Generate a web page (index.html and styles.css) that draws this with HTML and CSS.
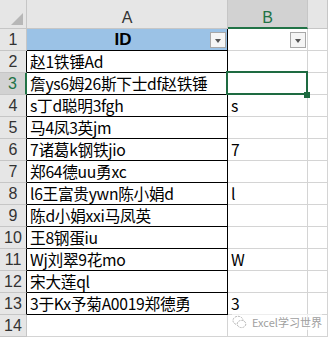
FILE: index.html
```html
<!DOCTYPE html>
<html lang="zh-CN">
<head>
    <meta charset="UTF-8">
    <title>Sheet</title>
    <link rel="stylesheet" href="styles.css">
</head>
<body>
    <div class="sheet">
        <div class="corner"><span class="tri"></span></div>
        <div class="col-head">A</div>
        <div class="col-head active">B</div>
        <div class="col-head"></div>

        <div class="row-head">1</div>
        <div class="cell a title">ID<span class="filter"></span></div>
        <div class="cell"><span class="filter"></span></div>
        <div class="cell"></div>

        <div class="row-head tbl">2</div>
        <div class="cell a">赵1铁锤Ad</div>
        <div class="cell"></div>
        <div class="cell"></div>

        <div class="row-head active">3</div>
        <div class="cell a">詹ys6姆26斯下士df赵铁锤</div>
        <div class="cell selected"><span class="handle"></span></div>
        <div class="cell"></div>

        <div class="row-head tbl">4</div>
        <div class="cell a">s丁d聪明3fgh</div>
        <div class="cell">s</div>
        <div class="cell"></div>

        <div class="row-head tbl">5</div>
        <div class="cell a">马4凤3英jm</div>
        <div class="cell"></div>
        <div class="cell"></div>

        <div class="row-head tbl">6</div>
        <div class="cell a">7诸葛k钢铁jio</div>
        <div class="cell">7</div>
        <div class="cell"></div>

        <div class="row-head tbl">7</div>
        <div class="cell a">郑64德uu勇xc</div>
        <div class="cell"></div>
        <div class="cell"></div>

        <div class="row-head tbl">8</div>
        <div class="cell a">l6王富贵ywn陈小娟d</div>
        <div class="cell">l</div>
        <div class="cell"></div>

        <div class="row-head tbl">9</div>
        <div class="cell a">陈d小娟xxi马凤英</div>
        <div class="cell"></div>
        <div class="cell"></div>

        <div class="row-head tbl">10</div>
        <div class="cell a">王8钢蛋iu</div>
        <div class="cell"></div>
        <div class="cell"></div>

        <div class="row-head tbl">11</div>
        <div class="cell a">Wj刘翠9花mo</div>
        <div class="cell">W</div>
        <div class="cell"></div>

        <div class="row-head tbl">12</div>
        <div class="cell a">宋大莲ql</div>
        <div class="cell"></div>
        <div class="cell"></div>

        <div class="row-head tbl">13</div>
        <div class="cell a">3于Kx予菊A0019郑德勇</div>
        <div class="cell">3</div>
        <div class="cell"></div>

        <div class="row-head">14</div>
        <div class="cell"></div>
        <div class="cell"></div>
        <div class="cell"></div>
    </div>

    <div class="watermark">
        <svg width="15" height="14" viewBox="0 0 15 14">
            <ellipse cx="6" cy="5.5" rx="5" ry="4.2" fill="none" stroke="#b5b5b5" stroke-width="1" stroke-dasharray="2 1"/>
            <ellipse cx="9.5" cy="9" rx="4.3" ry="3.6" fill="#fff" stroke="#b5b5b5" stroke-width="1" stroke-dasharray="2 1"/>
        </svg>
        <span>Excel学习世界</span>
    </div>
</body>
</html>
```

FILE: styles.css
```css
body {
    margin: 0;
    background: #ffffff;
    font-family: "Noto Sans CJK SC", "Liberation Sans", sans-serif;
}
.sheet {
    display: grid;
    grid-template-columns: 27px 201px 80px 1fr;
    grid-template-rows: 29px repeat(14, 22px);
    width: 328px;
}
.corner, .col-head, .row-head, .cell {
    box-sizing: border-box;
    border-right: 1px solid #d4d4d4;
    border-bottom: 1px solid #d4d4d4;
    position: relative;
}
.corner {
    background: #e6e6e6;
    border-color: #c6c6c6;
}
.tri {
    position: absolute;
    right: 3px;
    bottom: 3px;
    width: 0;
    height: 0;
    border-left: 12px solid transparent;
    border-bottom: 12px solid #b7b7b7;
}
.col-head {
    background: #e6e6e6;
    border-right-color: #c6c6c6;
    border-bottom-color: #c6c6c6;
    color: #333;
    font-family: "Liberation Sans", sans-serif;
    font-size: 16px;
    text-align: center;
    line-height: 36px;
}
.col-head.active {
    background: #d2d2d2;
    color: #217346;
    border-bottom: 2px solid #217346;
}
.row-head {
    background: #e6e6e6;
    border-right-color: #c6c6c6;
    border-bottom-color: #c6c6c6;
    color: #333;
    font-family: "Liberation Sans", sans-serif;
    font-size: 16px;
    text-align: center;
    line-height: 22px;
}
.row-head.tbl {
    border-right-color: #000;
}
.row-head.active {
    background: #d2d2d2;
    color: #217346;
    border-right: 2px solid #217346;
}
.cell {
    font-size: 15.7px;
    letter-spacing: -0.3px;
    line-height: 21px;
    padding-left: 3px;
    color: #000;
    white-space: nowrap;
}
.cell.a {
    border-right-color: #000;
    border-bottom-color: #000;
}
.cell.title {
    background: #9bc2e6;
    font-family: "Liberation Sans", sans-serif;
    font-weight: bold;
    font-size: 17px;
    letter-spacing: 0;
    text-align: center;
    padding-left: 0;
    padding-right: 8px;
}
.filter {
    position: absolute;
    right: 1px;
    top: 3px;
    width: 16px;
    height: 16px;
    box-sizing: border-box;
    background: #f5f5f5;
    border: 1px solid #a8a8a8;
}
.filter::after {
    content: "";
    position: absolute;
    left: 4px;
    top: 6px;
    border-left: 3.5px solid transparent;
    border-right: 3.5px solid transparent;
    border-top: 4px solid #555;
}
.selected::before {
    content: "";
    position: absolute;
    top: -2px;
    left: -2px;
    right: -1px;
    bottom: -1px;
    border: 2px solid #1e6b41;
}
.handle {
    position: absolute;
    right: -3px;
    bottom: -4px;
    width: 6px;
    height: 6px;
    background: #1e6b41;
    z-index: 1;
}
.watermark {
    position: absolute;
    left: 232px;
    top: 314px;
    display: flex;
    align-items: center;
    gap: 5px;
    color: #a0a0a0;
    font-size: 11px;
    background: rgba(255, 255, 255, 0.6);
}
```
